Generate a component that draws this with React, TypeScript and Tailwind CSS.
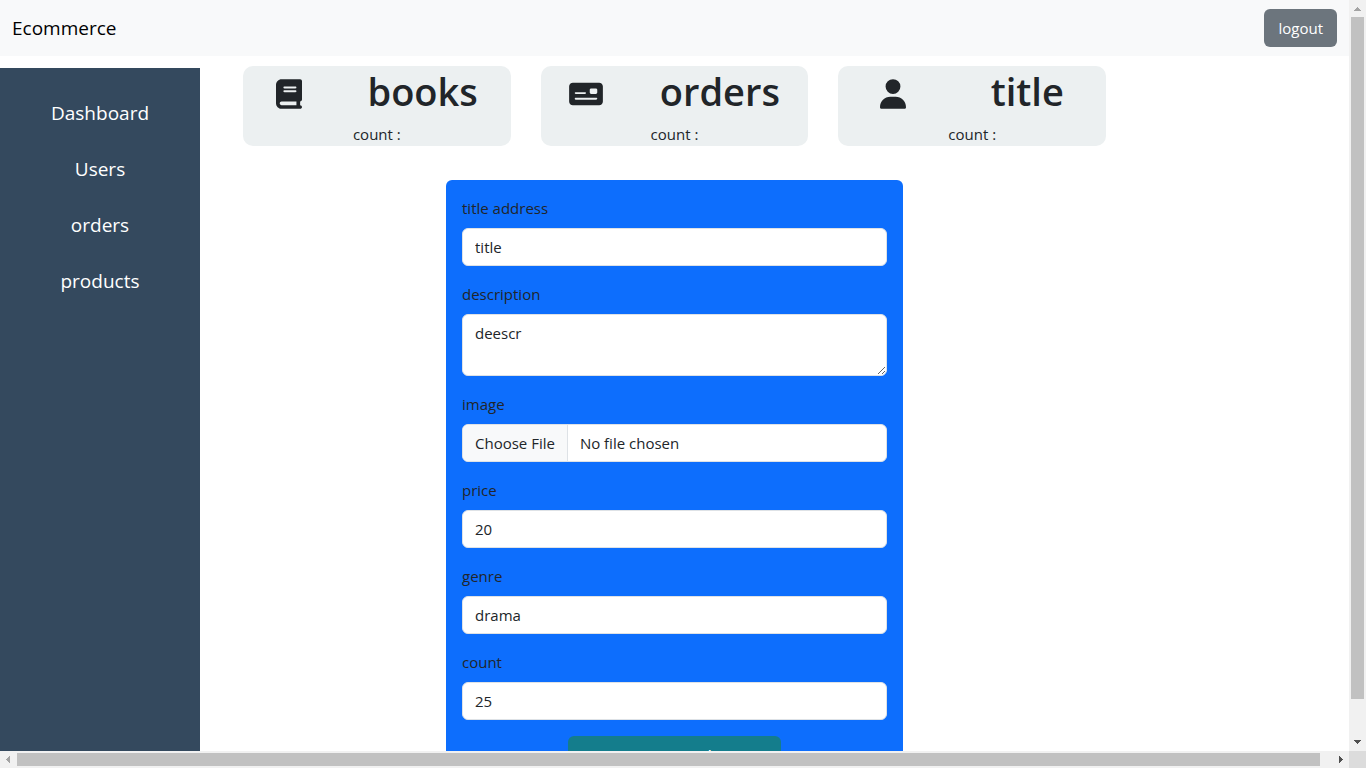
import type { ReactNode } from 'react';
import { FaBook, FaMoneyCheck, FaUser } from 'react-icons/fa6';

const links = ['Dashboard', 'Users', 'orders', 'products'];

const fieldClass =
  'block w-full rounded-md border border-[#dee2e6] bg-white px-3 py-1.5 text-[15px] leading-6 text-[#212529] outline-none';

function StatCard({ icon, title }: { icon: ReactNode; title: string }) {
  return (
    <section className="flex-1 rounded-[10px] bg-[#ecf0f1]">
      <div className="flex items-center justify-around">
        {icon}
        <h1 className="mb-1.5 text-[38px] leading-[50px] font-semibold">{title}</h1>
      </div>
      <p className="text-center leading-6">count :</p>
    </section>
  );
}

function Field({ id, label, children }: { id: string; label: string; children: ReactNode }) {
  return (
    <div className="mb-4">
      <label htmlFor={id} className="mb-2 block leading-6">
        {label}
      </label>
      {children}
    </div>
  );
}

function VerticalScrollbar() {
  return (
    <div aria-hidden="true" className="flex flex-col items-center bg-[#f1f1f1]">
      <svg className="size-[17px] shrink-0" viewBox="0 0 17 17" fill="#a3a3a3">
        <path d="M8 7h1v1h1v1h1v1h1v1H5v-1h1V9h1V8h1z" />
      </svg>
      <div className="w-[13px] grow-[682] bg-[#c1c1c1]" />
      <div className="grow-[35]" />
      <svg className="size-[17px] shrink-0" viewBox="0 0 17 17" fill="#505050">
        <path d="M5 6h7v1h-1v1h-1v1H9v1H8V9H7V8H6V7H5z" />
      </svg>
    </div>
  );
}

function HorizontalScrollbar() {
  return (
    <div aria-hidden="true" className="flex items-center bg-[#f1f1f1]">
      <svg className="size-[17px] shrink-0" viewBox="0 0 17 17" fill="#a3a3a3">
        <path d="M10 5v7H9v-1H8v-1H7V9H6V8h1V7h1V6h1V5z" />
      </svg>
      <div className="h-[13px] grow-[1303] bg-[#c1c1c1]" />
      <div className="grow-[12]" />
      <svg className="size-[17px] shrink-0" viewBox="0 0 17 17" fill="#505050">
        <path d="M7 5h1v1h1v1h1v1h1v1h-1v1H9v1H8v1H7z" />
      </svg>
    </div>
  );
}

export default function App() {
  return (
    <div className="grid h-screen grid-cols-[minmax(0,1fr)_17px] grid-rows-[minmax(0,1fr)_17px] bg-white font-['Open_Sans','Noto_Sans',sans-serif] text-[15px] text-[#212529]">
      <div className="flex flex-col overflow-hidden">
        <nav className="flex h-14 shrink-0 items-center justify-between bg-[#f8f9fa] px-3">
          <a href="#" className="text-[19px] leading-8 text-black">
            Ecommerce
          </a>
          <button type="button" className="rounded-md bg-[#6c757d] px-3.5 py-[7px] leading-6 text-white">
            logout
          </button>
        </nav>

        <div className="flex min-h-0 flex-1">
          <aside className="mt-3 w-[200px] shrink-0 bg-[#34495e] pt-[17px]">
            <ul>
              {links.map((link) => (
                <li key={link}>
                  <a href="#" className="block text-center text-[19px] leading-[56px] text-white">
                    {link}
                  </a>
                </li>
              ))}
            </ul>
          </aside>

          <main className="min-w-0 flex-1 pt-2.5">
            <div className="mr-[243px] ml-[43px] flex gap-[30px]">
              <StatCard title="books" icon={<FaBook className="h-[30px] w-[26px]" />} />
              <StatCard title="orders" icon={<FaMoneyCheck className="h-[30px] w-[34px]" />} />
              <StatCard title="title" icon={<FaUser className="h-[30px] w-[26px]" />} />
            </div>

            <div className="mt-[34px] flex justify-center pr-[200px]">
              <form className="w-[457px] rounded-md bg-[#0d6efd] p-4" onSubmit={(e) => e.preventDefault()}>
                <Field id="title" label="title address">
                  <input id="title" type="text" defaultValue="title" className={fieldClass} />
                </Field>
                <Field id="description" label="description">
                  <textarea id="description" rows={2} defaultValue="deescr" className={`${fieldClass} h-[62px] resize-y`} />
                </Field>
                <Field id="image" label="image">
                  <input
                    id="image"
                    type="file"
                    className="block h-[38px] w-full overflow-hidden rounded-md border border-[#dee2e6] bg-white pr-3 text-[15px] leading-6 text-[#212529] file:mr-3 file:h-9 file:border-0 file:border-r file:border-solid file:border-[#dee2e6] file:bg-[#f8f9fa] file:px-3 file:text-[#212529]"
                  />
                </Field>
                <Field id="price" label="price">
                  <input id="price" type="text" inputMode="numeric" defaultValue="20" className={fieldClass} />
                </Field>
                <Field id="genre" label="genre">
                  <input id="genre" type="text" defaultValue="drama" className={fieldClass} />
                </Field>
                <Field id="count" label="count">
                  <input id="count" type="text" inputMode="numeric" defaultValue="25" className={fieldClass} />
                </Field>
                <button
                  type="submit"
                  className="mx-auto block w-1/2 rounded-md bg-[#147d8c] py-1.5 text-[19px] leading-[30px] text-white"
                >
                  create product
                </button>
              </form>
            </div>
          </main>
        </div>
      </div>

      <VerticalScrollbar />
      <HorizontalScrollbar />
      <div className="bg-[#dcdcdc]" />
    </div>
  );
}
